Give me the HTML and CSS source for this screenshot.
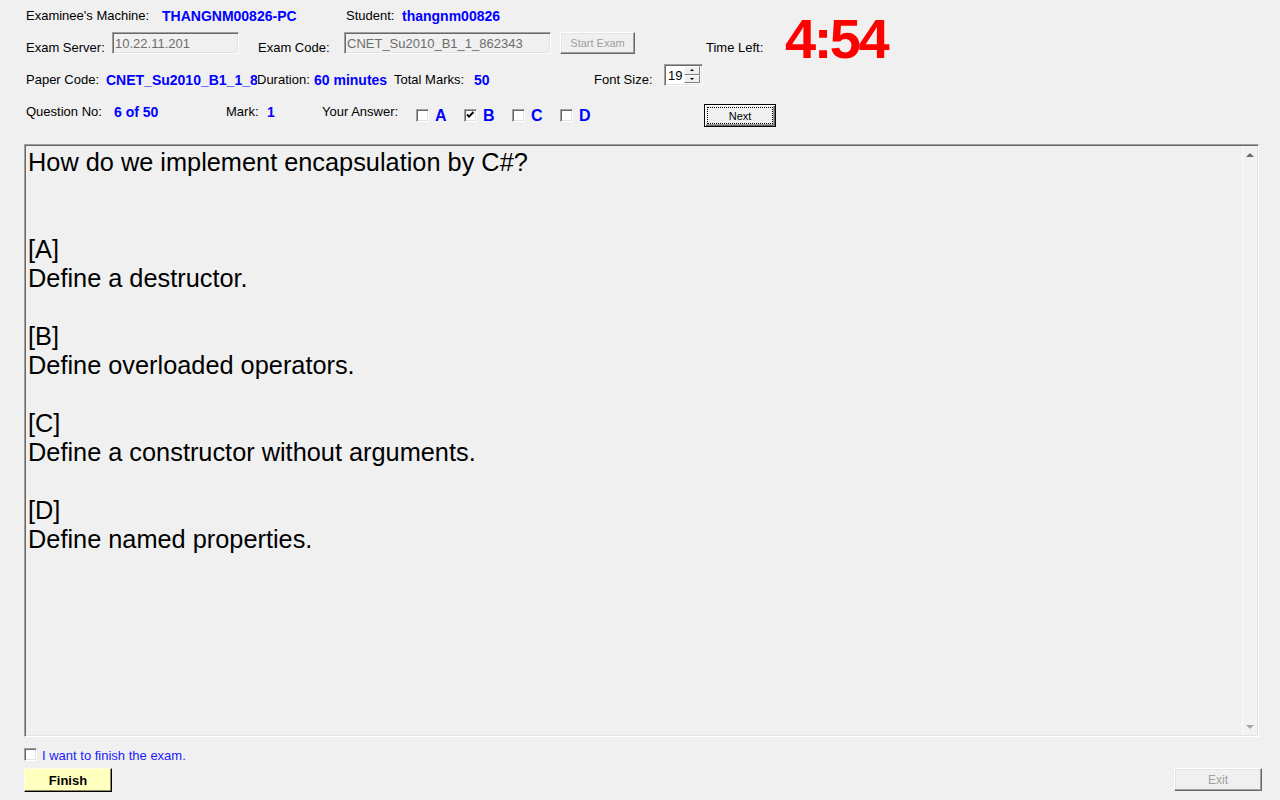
FILE: index.html
```html
<!DOCTYPE html>
<html>
<head>
<meta charset="utf-8">
<title>Exam Client</title>
<link rel="stylesheet" href="styles.css">
</head>
<body>
<div class="window">
  <div class="header">
    <div class="fields">
      <div class="row row1">
        <span class="lbl w136">Examinee's Machine:</span>
        <span class="val w184">THANGNM00826-PC</span>
        <span class="lbl w56">Student:</span>
        <span class="val">thangnm00826</span>
      </div>
      <div class="row row2">
        <span class="lbl low w86">Exam Server:</span>
        <div class="textbox tb-server">10.22.11.201</div>
        <span class="lbl low w86 ml19">Exam Code:</span>
        <div class="textbox tb-code">CNET_Su2010_B1_1_862343</div>
        <button class="btn btn-start" disabled>Start Exam</button>
        <span class="lbl low ml71">Time Left:</span>
      </div>
      <div class="row row3">
        <span class="lbl low w80">Paper Code:</span>
        <span class="val low w151 clip">CNET_Su2010_B1_1_862343</span>
        <span class="lbl low w57">Duration:</span>
        <span class="val low w80">60 minutes</span>
        <span class="lbl low w80">Total Marks:</span>
        <span class="val low w120">50</span>
        <span class="lbl low w70">Font Size:</span>
        <div class="spinner">
          <span class="spin-value">19</span>
          <div class="spin-btns">
            <div class="spin-btn"><span class="arr-up"></span></div>
            <div class="spin-btn"><span class="arr-down"></span></div>
          </div>
        </div>
      </div>
      <div class="row row4">
        <span class="lbl w88">Question No:</span>
        <span class="val w112">6 of 50</span>
        <span class="lbl w41">Mark:</span>
        <span class="val w55">1</span>
        <span class="lbl w94">Your Answer:</span>
        <div class="opt"><span class="cb"></span><span class="opt-letter">A</span></div>
        <div class="opt"><span class="cb"><svg class="check" width="9" height="9" viewBox="0 0 9 9"><polyline points="1,3.5 3,5.6 7.5,1" fill="none" stroke="#000" stroke-width="1.9"/></svg></span><span class="opt-letter">B</span></div>
        <div class="opt"><span class="cb"></span><span class="opt-letter">C</span></div>
        <div class="opt"><span class="cb"></span><span class="opt-letter">D</span></div>
        <button class="btn btn-next">Next</button>
      </div>
    </div>
    <div class="timer">4:54</div>
  </div>

  <div class="qbox">
    <div class="question">How do we implement encapsulation by C#?


[A]
Define a destructor.

[B]
Define overloaded operators.

[C]
Define a constructor without arguments.

[D]
Define named properties.</div>
    <div class="scrollbar">
      <span class="sb-up"></span>
      <span class="sb-down"></span>
    </div>
  </div>

  <div class="finish-check">
    <span class="cb"></span>
    <span class="finish-text">I want to finish the exam.</span>
  </div>

  <div class="actions">
    <button class="btn btn-finish">Finish</button>
    <button class="btn btn-exit" disabled>Exit</button>
  </div>
</div>
</body>
</html>
```

FILE: styles.css
```css
* { box-sizing: border-box; }

html, body {
  margin: 0;
  padding: 0;
}

body {
  width: 1280px;
  height: 800px;
  overflow: hidden;
  background: #f0f0f0;
  font-family: "Liberation Sans", Arial, sans-serif;
  font-size: 13px;
  color: #000;
}

button {
  font-family: "Liberation Sans", Arial, sans-serif;
  padding: 0;
  margin: 0;
}

.header {
  display: flex;
  align-items: flex-start;
}

.fields {
  flex: none;
  width: 785px;
  padding-left: 26px;
}

.row {
  display: flex;
  align-items: flex-start;
}

.row1 { margin-top: 8px; height: 15px; }
.row2 { margin-top: 9px; height: 23px; }
.row3 { margin-top: 9px; height: 23px; }
.row4 { margin-top: 17px; height: 23px; }

.lbl {
  flex: none;
  display: block;
  font-size: 13px;
  line-height: 15px;
  white-space: nowrap;
}

.val {
  flex: none;
  display: block;
  font-size: 14px;
  font-weight: bold;
  line-height: 15px;
  color: #0000ff;
  white-space: nowrap;
  padding-top: 1px;
}

.low { margin-top: 8px; }

.clip { overflow: hidden; }

.w41 { width: 41px; }
.w55 { width: 55px; }
.w56 { width: 56px; }
.w57 { width: 57px; }
.w70 { width: 70px; }
.w80 { width: 80px; }
.w86 { width: 86px; }
.w88 { width: 88px; }
.w94 { width: 94px; }
.w112 { width: 112px; }
.w120 { width: 120px; }
.w136 { width: 136px; }
.w151 { width: 151px; }
.w184 { width: 184px; }
.ml19 { margin-left: 19px; }
.ml71 { margin-left: 71px; }

/* sunken 3D edit box */
.textbox {
  flex: none;
  height: 22px;
  border-style: solid;
  border-width: 1px;
  border-color: #a0a0a0 #ffffff #ffffff #a0a0a0;
  box-shadow: inset 1px 1px 0 #696969, inset -1px -1px 0 #e3e3e3;
  padding: 3px 0 0 2px;
  font-size: 13px;
  line-height: 15px;
  color: #6d6d6d;
  white-space: nowrap;
  overflow: hidden;
}

.tb-server { width: 127px; }
.tb-code { width: 207px; }

.btn {
  flex: none;
  background: #f0f0f0;
  border-style: solid;
  border-width: 1px;
  border-color: #ffffff #696969 #696969 #ffffff;
  box-shadow: inset -1px -1px 0 #a0a0a0, inset 1px 1px 0 #e3e3e3;
  color: #000;
}

.btn-start {
  margin-left: 9px;
  width: 75px;
  height: 22px;
  font-size: 11px;
  color: #a0a0a0;
}

.btn-next {
  margin-left: 96px;
  width: 72px;
  height: 23px;
  font-size: 11px;
  border-color: #000;
  box-shadow: inset 1px 1px 0 #ffffff, inset -1px -1px 0 #696969, inset -2px -2px 0 #a0a0a0;
  outline: 1px dotted #000;
  outline-offset: -4px;
}

/* spinner */
.spinner {
  flex: none;
  display: flex;
  width: 39px;
  height: 22px;
  border-style: solid;
  border-width: 1px;
  border-color: #a0a0a0 #ffffff #ffffff #a0a0a0;
  box-shadow: inset 1px 1px 0 #696969, inset -1px -1px 0 #e3e3e3;
  background: #ffffff;
  padding: 1px 2px 2px 1px;
}

.spin-value {
  flex: 1;
  padding: 2px 0 0 2px;
  font-size: 13px;
  line-height: 15px;
}

.spin-btns {
  flex: none;
  width: 16px;
  display: flex;
  flex-direction: column;
}

.spin-btn {
  flex: 1;
  display: flex;
  align-items: center;
  justify-content: center;
  background: #f0f0f0;
  border-style: solid;
  border-width: 1px;
  border-color: #ffffff #808080 #808080 #ffffff;
}

.arr-up, .arr-down {
  width: 0;
  height: 0;
  border-left: 2px solid transparent;
  border-right: 2px solid transparent;
}
.arr-up { border-bottom: 2px solid #000; }
.arr-down { border-top: 2px solid #000; }

/* checkboxes */
.cb {
  flex: none;
  display: block;
  width: 13px;
  height: 13px;
  border-style: solid;
  border-width: 1px;
  border-color: #a0a0a0 #ffffff #ffffff #a0a0a0;
  box-shadow: inset 1px 1px 0 #696969, inset -1px -1px 0 #e3e3e3;
  background: #ffffff;
  padding: 1px;
}

.check { display: block; }

.opt {
  flex: none;
  display: flex;
  align-items: flex-start;
  width: 48px;
}

.opt .cb { margin-top: 5px; }

.opt-letter {
  margin-left: 6px;
  margin-top: 3px;
  font-size: 16px;
  line-height: 18px;
  font-weight: bold;
  color: #0000ff;
}

/* timer */
.timer {
  flex: none;
  margin-top: 10px;
  font-size: 56px;
  line-height: 57px;
  font-weight: bold;
  color: #ff0000;
  letter-spacing: -2.5px;
}

/* question area */
.qbox {
  display: flex;
  margin: 17px 0 0 24px;
  width: 1235px;
  height: 593px;
  border-style: solid;
  border-width: 1px;
  border-color: #a0a0a0 #ffffff #ffffff #a0a0a0;
  box-shadow: inset 1px 1px 0 #696969, inset -1px -1px 0 #e3e3e3;
  padding: 1px 1px 1px 1px;
}

.question {
  flex: 1;
  padding: 2px 0 0 2px;
  font-size: 25.33px;
  line-height: 29px;
  white-space: pre-line;
  color: #000;
}

.scrollbar {
  flex: none;
  width: 15px;
  border-left: 1px solid #fbfbfb;
  background: #f2f2f2;
  display: flex;
  flex-direction: column;
  justify-content: space-between;
  align-items: center;
  padding: 7px 0 6px 0;
}

.sb-up, .sb-down {
  display: block;
  width: 0;
  height: 0;
  border-left: 4px solid transparent;
  border-right: 4px solid transparent;
}
.sb-up { border-bottom: 4px solid #6a6a6a; }
.sb-down { border-top: 4px solid #a8a8a8; }

/* bottom */
.finish-check {
  display: flex;
  align-items: flex-start;
  margin: 11px 0 0 24px;
  height: 15px;
}

.finish-text {
  margin-left: 5px;
  font-size: 13px;
  line-height: 15px;
  color: #2020ff;
}

.actions {
  display: flex;
  justify-content: space-between;
  align-items: flex-start;
  margin-top: 5px;
  padding: 0 18px 0 24px;
}

.btn-finish {
  width: 88px;
  height: 24px;
  background: #ffffc0;
  border-color: #ffffe6 #000000 #000000 #ffffe6;
  box-shadow: inset -1px -1px 0 #8a8a60;
  font-size: 13px;
  font-weight: bold;
  color: #000;
}

.btn-exit {
  width: 88px;
  height: 23px;
  font-size: 12px;
  color: #a0a0a0;
}
```
